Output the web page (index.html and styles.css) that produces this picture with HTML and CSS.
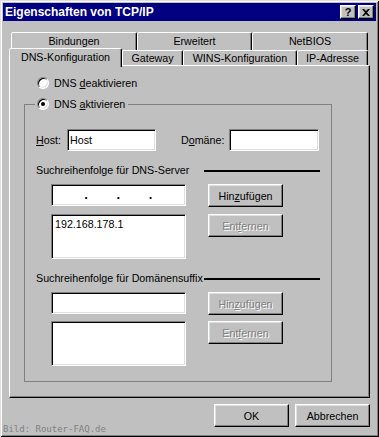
FILE: index.html
```html
<!DOCTYPE html>
<html lang="de">
<head>
<meta charset="utf-8">
<title>Eigenschaften von TCP/IP</title>
<link rel="stylesheet" href="styles.css">
</head>
<body>
<div class="window">
  <div class="titlebar">
    <span class="title">Eigenschaften von TCP/IP</span>
    <span class="tbtn help">?</span>
    <span class="tbtn close"><svg width="8" height="7" viewBox="0 0 8 7"><path d="M0 0h2l2 2 2-2h2L5 3.5 8 7H6L4 5 2 7H0l3-3.5z" fill="#000"/></svg></span>
  </div>

  <div class="tabs">
    <div class="tabrow back">
      <div class="tab t-bind">Bindungen</div>
      <div class="tab t-erw">Erweitert</div>
      <div class="tab t-net">NetBIOS</div>
    </div>
    <div class="tabrow front">
      <div class="tab t-dns selected">DNS-Konfiguration</div>
      <div class="tab t-gw">Gateway</div>
      <div class="tab t-wins">WINS-Konfiguration</div>
      <div class="tab t-ip">IP-Adresse</div>
    </div>
  </div>

  <div class="panel">
    <div class="radio-row">
      <span class="radio"></span>
      <span class="rlabel">DNS <u>d</u>eaktivieren</span>
    </div>

    <div class="group">
      <div class="legend">
        <span class="radio checked"></span>
        <span class="rlabel">DNS <u>a</u>ktivieren</span>
      </div>

      <div class="host-row">
        <span class="lbl lbl-host"><u>H</u>ost:</span>
        <div class="field f-host">Host</div>
        <span class="lbl lbl-dom">D<u>o</u>mäne:</span>
        <div class="field f-dom"></div>
      </div>

      <div class="heading">
        <span class="htext">Suchreihenfolge für DNS-Server</span>
        <span class="hline"></span>
      </div>

      <div class="ctl-row">
        <div class="field f-ip">
          <span class="oct"></span><span class="dot">.</span><span class="oct"></span><span class="dot">.</span><span class="oct"></span><span class="dot">.</span><span class="oct"></span>
        </div>
        <div class="btn">Hin<u>z</u>ufügen</div>
      </div>

      <div class="ctl-row list-row">
        <div class="field list">192.168.178.1</div>
        <div class="btn disabled">Ent<u>f</u>ernen</div>
      </div>

      <div class="heading h2">
        <span class="htext">Suchreihenfolge für Domänensuffix</span>
        <span class="hline"></span>
      </div>

      <div class="ctl-row">
        <div class="field f-suffix"></div>
        <div class="btn disabled">Hin<u>z</u>ufügen</div>
      </div>

      <div class="ctl-row list-row2">
        <div class="field list"></div>
        <div class="btn disabled">Ent<u>f</u>ernen</div>
      </div>
    </div>
  </div>

  <div class="footer">
    <span class="credit">Bild: Router-FAQ.de</span>
    <div class="btn dlg ok">OK</div>
    <div class="btn dlg cancel">Abbrechen</div>
  </div>
</div>
</body>
</html>
```

FILE: styles.css
```css
* { box-sizing: border-box; }

body {
  margin: 0;
  background: #c0c0c0;
  color: #000;
  font-family: "Liberation Sans", Arial, sans-serif;
  font-size: 10.7px;
}

.window {
  width: 379px;
  height: 437px;
  padding: 3px;
  background: #c0c0c0;
  display: flex;
  flex-direction: column;
  box-shadow: inset 1px 1px #dfdfdf, inset -1px -1px #000, inset 2px 2px #fff, inset -2px -2px #808080;
}

/* title bar */
.titlebar {
  height: 18px;
  flex: none;
  background: #000080;
  color: #fff;
  font-weight: bold;
  font-size: 12px;
  display: flex;
  align-items: center;
  padding: 0 2px 0 2px;
}
.title { flex: 1; white-space: nowrap; }
.tbtn {
  width: 16px;
  height: 14px;
  background: #c0c0c0;
  color: #000;
  border: 1px solid;
  border-color: #fff #000 #000 #fff;
  box-shadow: inset -1px -1px #808080, inset 1px 1px #dfdfdf;
  display: flex;
  align-items: center;
  justify-content: center;
  font-size: 11px;
  font-weight: bold;
  line-height: 1;
}
.tbtn + .tbtn { margin-left: 2px; }

/* tabs */
.tabs {
  margin-top: 11px;
  flex: none;
}
.tabrow { display: flex; }
.tabrow.back { margin-left: 8px; height: 18px; }
.tabrow.front {
  margin-left: 6px;
  margin-top: -2px;
  height: 17px;
  align-items: flex-start;
}
.tab {
  height: 18px;
  background: #c0c0c0;
  border: 1px solid;
  border-bottom: none;
  border-color: #fff #000 transparent #fff;
  border-radius: 2px 2px 0 0;
  box-shadow: inset -1px 0 #808080;
  display: flex;
  align-items: center;
  justify-content: center;
  white-space: nowrap;
  padding-bottom: 1px;
}
.tabrow.front .tab { margin-top: 2px; height: 15px; padding-bottom: 0; }
.tabrow.front .tab.selected {
  margin-top: 0;
  height: 19px;
  position: relative;
  z-index: 1;
  padding-bottom: 2px;
}
.t-bind { width: 126px; }
.t-erw { width: 115px; }
.t-net { width: 116px; }
.t-dns { width: 113px; }
.t-gw { width: 61px; }
.t-wins { width: 114px; }
.t-ip { width: 71px; }

/* panel */
.panel {
  flex: none;
  margin-left: 6px;
  width: 361px;
  height: 333px;
  border: 1px solid;
  border-color: #fff #000 #000 #fff;
  box-shadow: inset -1px -1px #808080;
}

.radio-row {
  display: flex;
  align-items: center;
  height: 14px;
  margin: 10px 0 0 27px;
}
.radio {
  width: 12px;
  height: 12px;
  flex: none;
  border-radius: 50%;
  background: #fff;
  border: 1px solid;
  border-color: #808080 #fff #fff #808080;
  box-shadow: inset 1px 1px #000, inset -1px -1px #dfdfdf;
  position: relative;
}
.radio.checked::after {
  content: "";
  position: absolute;
  left: 3px;
  top: 3px;
  width: 4px;
  height: 4px;
  border-radius: 50%;
  background: #000;
}
.rlabel { margin-left: 5px; white-space: nowrap; }

.group {
  margin: 14px 0 0 14px;
  width: 308px;
  height: 278px;
  border: 1px solid #808080;
  display: flex;
  flex-direction: column;
  padding-left: 10px;
}
.legend {
  align-self: flex-start;
  display: flex;
  align-items: center;
  height: 14px;
  margin: -8px 0 0 0;
  padding: 0 3px 0 2px;
  background: #c0c0c0;
}

.host-row {
  display: flex;
  align-items: center;
  height: 22px;
  margin-top: 18px;
  margin-left: 1px;
}
.lbl { white-space: nowrap; }
.lbl-host { width: 31px; }
.lbl-dom { width: 48px; margin-left: 25px; }

.field {
  background: #fff;
  border: 1px solid;
  border-color: #808080 #fff #fff #808080;
  box-shadow: inset 1px 1px #000, inset -1px -1px #dfdfdf;
  height: 22px;
  flex: none;
}
.f-host { width: 89px; padding: 3px 0 0 2px; line-height: 14px; }
.f-dom { width: 90px; }

.heading {
  display: grid;
  grid-template-columns: 168px 116px;
  align-items: center;
  height: 14px;
  margin-top: 12px;
  margin-left: 1px;
}
.htext { white-space: nowrap; }
.hline { height: 2px; background: #000; margin-top: 1px; }

.ctl-row {
  display: flex;
  align-items: flex-start;
  margin-top: 7px;
  margin-left: 16px;
}
.list-row2 { margin-top: 6px; }
.f-ip, .f-suffix { width: 135px; }
.f-ip {
  display: flex;
  align-items: center;
  padding: 0 4px 2px 2px;
  font-weight: bold;
  font-size: 13px;
}
.oct { flex: 1; }
.dot { width: 2px; overflow: visible; line-height: 1; }
.list {
  width: 135px;
  height: 45px;
  padding: 2px 0 0 3px;
  line-height: 14px;
}

.btn {
  width: 75px;
  height: 23px;
  flex: none;
  margin-left: 22px;
  background: #c0c0c0;
  border: 1px solid;
  border-color: #fff #000 #000 #fff;
  box-shadow: inset -1px -1px #808080, inset 1px 1px #dfdfdf;
  display: flex;
  align-items: center;
  justify-content: center;
  white-space: nowrap;
}
.btn.disabled {
  color: #808080;
  text-shadow: 1px 1px #fff;
}

/* footer */
.footer {
  flex: 1;
  display: flex;
  align-items: flex-start;
  padding-top: 6px;
}
.credit {
  align-self: flex-end;
  font-family: "DejaVu Sans Mono", "Liberation Mono", monospace;
  font-size: 9px;
  line-height: 10px;
  color: #808080;
  margin-right: auto;
}
.btn.dlg { margin-left: 0; }
.btn.cancel { margin-left: 6px; margin-right: 6px; }
```
